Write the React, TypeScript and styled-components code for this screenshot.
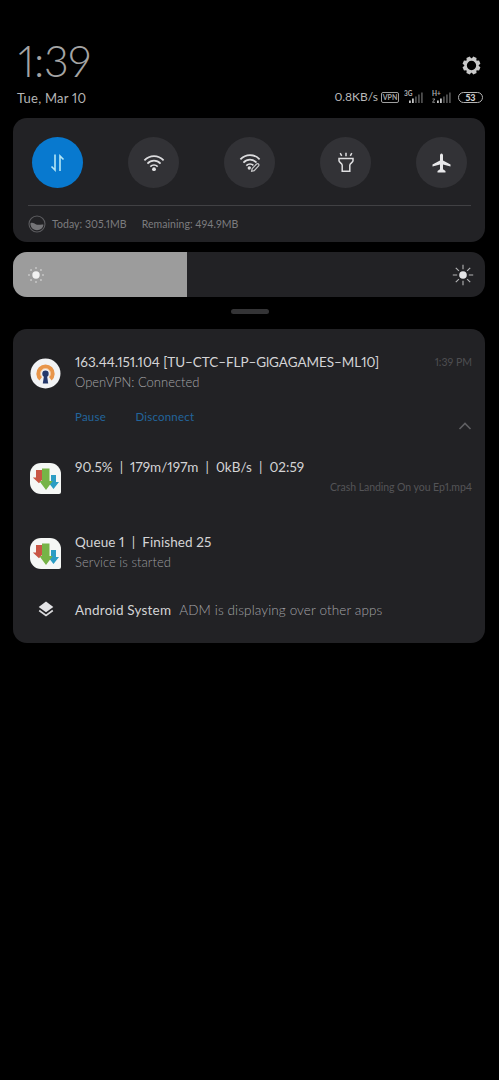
import React from 'react';
import styled, { createGlobalStyle } from 'styled-components';

const GlobalStyle = createGlobalStyle`
  * { box-sizing: border-box; }
  body { margin: 0; background: #000; }
`;

const Screen = styled.main`
  width: 499px;
  height: 1080px;
  padding: 40px 14px 0 13px;
  background: #000;
  overflow: hidden;
  font-family: Lato, 'Noto Sans', sans-serif;
  font-variant-numeric: proportional-nums;
  color: #d4d4d6;
`;

const Text = styled.span<{ $size: number; $color?: string; $spacing?: number; $weight?: number }>`
  display: block;
  white-space: pre;
  font-size: ${p => p.$size}px;
  line-height: 20px;
  font-weight: ${p => p.$weight ?? 400};
  color: ${p => p.$color ?? '#d4d4d6'};
  letter-spacing: ${p => p.$spacing ?? 0}px;
`;

const Header = styled.header`
  display: flex;
  justify-content: space-between;
  height: 78px;
  padding-left: 4px;
`;

const Clock = styled.div`
  height: 44px;
  padding-left: 1px;
  font-size: 43px;
  line-height: 42px;
  font-weight: 300;
  color: #a4a4a4;
  letter-spacing: -0.3px;
  margin-bottom: 4px;
`;

const StatusSide = styled.div`
  display: flex;
  flex-direction: column;
  align-items: flex-end;
  padding: 16px 2px 0 0;
`;

const StatusBar = styled.div`
  display: flex;
  align-items: center;
  height: 20px;
  margin-top: 12px;
`;

const Gear = styled.svg`
  margin-right: 2px;
`;

const VpnBadge = styled.span`
  width: 18px;
  height: 11px;
  margin-left: 3px;
  border: 1px solid #a0a0a0;
  border-radius: 2px;
  font-size: 7px;
  line-height: 9px;
  font-weight: 700;
  text-align: center;
  color: #a8a8a8;
`;

const Battery = styled.span`
  width: 25px;
  height: 11px;
  margin-left: 6px;
  border: 1px solid #b4b4b4;
  border-radius: 6px;
  font-size: 9px;
  line-height: 9px;
  font-weight: 900;
  text-align: center;
  color: #d0d0d0;
`;

const Signal = styled.svg<{ $gap: number }>`
  margin-left: ${p => p.$gap}px;
`;

const Panel = styled.section`
  background: #222225;
  border-radius: 14px;
  overflow: hidden;
`;

const TogglePanel = styled(Panel)`
  height: 124px;
  padding: 19px 14px 0 15px;
`;

const Toggles = styled.div`
  display: flex;
  justify-content: space-between;
  padding: 0 4px 0 4px;
`;

const Toggle = styled.button<{ $on?: boolean }>`
  display: grid;
  place-items: center;
  width: 51px;
  height: 51px;
  padding: 0;
  border: 0;
  border-radius: 50%;
  background: ${p => (p.$on ? '#0879cf' : '#323236')};
`;

const Usage = styled.div`
  display: flex;
  align-items: center;
  height: 36px;
  margin-top: 17px;
  border-top: 1px solid #414144;
`;

const UsageText = styled(Text)<{ $gap: number }>`
  margin-left: ${p => p.$gap}px;
`;

const Slider = styled.section`
  display: flex;
  height: 45px;
  margin-top: 10px;
  border-radius: 14px;
  background: #222225;
  overflow: hidden;
`;

const SliderFill = styled.div`
  display: flex;
  align-items: center;
  width: 173.5px;
  padding-left: 13px;
  background: #9c9c9c;
`;

const SliderRest = styled.div`
  display: flex;
  flex: 1;
  align-items: center;
  justify-content: flex-end;
  padding-right: 11px;
`;

const Handle = styled.div`
  width: 38px;
  height: 5px;
  margin: 12px auto 15px 218px;
  border-radius: 3px;
  background: #343436;
`;

const NotificationPanel = styled(Panel)`
  height: 314px;
`;

const Notification = styled.article<{ $height: number; $top: number }>`
  display: flex;
  height: ${p => p.$height}px;
  padding: ${p => p.$top}px 13px 0 17px;
`;

const IconSlot = styled.div<{ $top?: number }>`
  flex: none;
  display: flex;
  justify-content: center;
  width: 31px;
  height: 31px;
  margin: ${p => p.$top ?? 0}px 14px 0 0;
`;

const Body = styled.div`
  flex: 1;
  min-width: 0;
`;

const Line = styled.div<{ $end?: boolean }>`
  display: flex;
  align-items: center;
  justify-content: ${p => (p.$end ? 'flex-end' : 'space-between')};
  height: 20px;
`;

const Inline = styled.div<{ $gap: number }>`
  display: flex;
  gap: ${p => p.$gap}px;
`;

const Actions = styled.div`
  display: flex;
  justify-content: space-between;
  margin-top: 15px;
`;

const Chevron = styled.svg`
  margin-top: 12px;
`;

const DataIcon = () => (
  <svg width="17" height="20" viewBox="0 0 17 20" fill="none" stroke="#b5e6f5" strokeWidth="1.6">
    <path d="M6 1.5V17L2.5 13.5M11 18V3l3.5 3.5" />
  </svg>
);

const WifiArcs = () => (
  <g fill="none" stroke="#dcdcde" strokeWidth="1.7">
    <path d="M1.4 6.4C6.8.6 15.2.6 20.6 6.4M4.4 9.7c3.8-4 9.4-4 13.2 0M7.3 12.7c2.2-2.3 5.2-2.3 7.4 0" />
  </g>
);

const WifiIcon = () => (
  <svg width="22" height="18" viewBox="0 0 22 18">
    <WifiArcs />
    <circle cx="11" cy="15.2" r="1.9" fill="#e4e4e6" />
  </svg>
);

const WifiEditIcon = () => (
  <svg width="22" height="20" viewBox="0 0 22 20">
    <WifiArcs />
    <circle cx="10.3" cy="15" r="1.7" fill="#dcdcde" />
    <path d="M13 16l4.5-4.8 2 1.8-4.5 5-2.4.4z" fill="#323236" stroke="#323236" strokeWidth="2.6" />
    <path d="M13.2 15.6l4.4-4.6c1.4-1 3 .5 2 1.9l-4.4 4.8-2.6.6z" fill="none" stroke="#c8c8ca" strokeWidth="1.2" />
  </svg>
);

const TorchIcon = () => (
  <svg width="18" height="22" viewBox="0 0 18 22" fill="none" stroke="#dedee0" strokeWidth="1.5">
    <path d="M2 6.5h14v2.2c0 1.7-3.2 2.6-3.2 4.5v6H5.2v-6c0-1.9-3.2-2.8-3.2-4.5zM9 .8v3.5M3.2 1.2l1.5 2.6M14.8 1.2l-1.5 2.6" />
  </svg>
);

const PlaneIcon = () => (
  <svg width="19" height="20" viewBox="0 0 19 20" fill="#e8e8ea">
    <path d="M9.5.5c1 0 1.5 1 1.5 2.1v4.8l7.5 4.2v2l-7.5-2v4.7l2.5 1.8V19.4H5.5v-1.3L8 16.3v-4.7l-7.5 2v-2L8 7.4V2.6C8 1.5 8.5.5 9.5.5z" />
  </svg>
);

const GearIcon = () => (
  <Gear width="19" height="19" viewBox="-9.5 -9.5 19 19">
    {[0, 45, 90, 135, 180, 225, 270, 315].map(a => (
      <path key={a} d="M-2.5-6.2L-1.8-8.9H1.8L2.5-6.2z" fill="#c9c9c9" transform={`rotate(${a + 22.5})`} />
    ))}
    <circle r="5.9" fill="none" stroke="#c9c9c9" strokeWidth="2.5" />
  </Gear>
);

const SignalIcon = ({ label, gap, lit, roam }: { label: string; gap: number; lit: number; roam?: boolean }) => (
  <Signal $gap={gap} width="20" height="14" viewBox="0 0 20 14">
    <text x="0" y="6" fontFamily="Lato, sans-serif" fontSize="6.5" fontWeight="700" fill="#b0b0b0">{label}</text>
    {roam && <path d="M.5 9h2.4L.5 12.3H3" fill="none" stroke="#999" strokeWidth=".9" />}
    {[0, 1, 2, 3, 4].map(i => (
      <rect key={i} x={5 + i * 3} y={10.5 - i * 2} width="1.8" height={2.5 + i * 2} fill={i < lit ? '#c4c4c4' : '#4d4d4d'} />
    ))}
  </Signal>
);

const UsageIcon = () => (
  <svg width="18" height="18" viewBox="0 0 18 18">
    <circle cx="9" cy="9" r="8" fill="none" stroke="#5c5c5f" strokeWidth="1.1" />
    <path d="M2.5 8.2c2.2-1.4 4.4.9 6.5 1.5 2.2.5 4.4-.5 6.5 0a6.6 6.6 0 0 1-13 0z" fill="#747477" />
  </svg>
);

const DimSun = () => (
  <svg width="20" height="20" viewBox="-10 -10 20 20" fill="#f2f2f2">
    <circle r="3.7" />
    {[0, 45, 90, 135, 180, 225, 270, 315].map(a => (
      <circle key={a} cy="-7" r="1" fill="#c6c6c6" transform={`rotate(${a})`} />
    ))}
  </svg>
);

const BrightSun = () => (
  <svg width="22" height="22" viewBox="-11 -11 22 22">
    <circle r="3.8" fill="#e4e4e6" />
    {[0, 45, 90, 135, 180, 225, 270, 315].map(a => (
      <path key={a} d="M0-5.8V-10.2" stroke="#b4b4b6" strokeWidth="1.1" transform={`rotate(${a})`} />
    ))}
  </svg>
);

const VpnIcon = () => (
  <svg width="31" height="31" viewBox="0 0 31 31">
    <circle cx="15.5" cy="15.5" r="15" fill="#f2f3f5" />
    <path d="M9.4 22.6A9.2 9.2 0 1 1 21.6 22.6L19 19.1a5 5 0 1 0-7 0z" fill="#e8954a" />
    <path d="M11.7 18.8a5 5 0 1 1 7.6 0" fill="none" stroke="#f6c596" strokeWidth="1" />
    <circle cx="15.5" cy="15.7" r="3.2" fill="#24386b" />
    <path d="M14.1 17h2.8l1.3 8.6h-5.4z" fill="#24386b" />
  </svg>
);

const AdmIcon = () => (
  <svg width="31" height="31" viewBox="0 0 31 31">
    <path d="M11 0h9a11 11 0 0 1 11 11v18a2 2 0 0 1-2 2H11A11 11 0 0 1 0 20v-9A11 11 0 0 1 11 0z" fill="#f5f7f5" />
    <path d="M6 7h6v7.5h2.2L9 20.3l-6.2-5.8H6z" fill="#c95645" />
    <path d="M21 12h5v7h3l-5.5 7-5.5-7h3z" fill="#2b9dc4" />
    <path d="M12 5.5h7.5V18h3.2l-6.7 9-6.7-9H12z" fill="#76b447" />
  </svg>
);

const LayersIcon = () => (
  <svg width="18" height="18" viewBox="0 0 18 18">
    <path d="M9 1.5l7.3 5.4L9 12.3 1.7 6.9z" fill="#e4e4e6" />
    <path d="M2.2 10.5L9 15.5l6.8-5" fill="none" stroke="#d8d8da" strokeWidth="1.7" />
  </svg>
);

export default function App() {
  return (
    <Screen>
      <GlobalStyle />
      <Header>
        <div>
          <Clock>1:39</Clock>
          <Text $size={13} $color="#b5b5b5" $spacing={0.25}>Tue, Mar 10</Text>
        </div>
        <StatusSide>
          <GearIcon />
          <StatusBar>
            <Text $size={12} $color="#b8b8b8">0.8KB/s</Text>
            <VpnBadge>VPN</VpnBadge>
            <SignalIcon label="3G" gap={5} lit={2} />
            <SignalIcon label="H+" gap={8} lit={2} roam />
            <Battery>53</Battery>
          </StatusBar>
        </StatusSide>
      </Header>

      <TogglePanel>
        <Toggles>
          <Toggle $on aria-label="Mobile data"><DataIcon /></Toggle>
          <Toggle aria-label="Wi-Fi"><WifiIcon /></Toggle>
          <Toggle aria-label="Wi-Fi settings"><WifiEditIcon /></Toggle>
          <Toggle aria-label="Torch"><TorchIcon /></Toggle>
          <Toggle aria-label="Aeroplane mode"><PlaneIcon /></Toggle>
        </Toggles>
        <Usage>
          <UsageIcon />
          <UsageText $gap={6} $size={10.5} $color="#7c7c7f" $spacing={0.05}>Today: 305.1MB</UsageText>
          <UsageText $gap={15} $size={10.5} $color="#7c7c7f" $spacing={0.05}>Remaining: 494.9MB</UsageText>
        </Usage>
      </TogglePanel>

      <Slider>
        <SliderFill><DimSun /></SliderFill>
        <SliderRest><BrightSun /></SliderRest>
      </Slider>
      <Handle />

      <NotificationPanel>
        <Notification $height={115} $top={23}>
          <IconSlot $top={6}><VpnIcon /></IconSlot>
          <Body>
            <Line>
              <Text $size={13.5} $spacing={-0.05}>163.44.151.104 [TU–CTC–FLP–GlGAGAMES–ML10]</Text>
              <Text $size={10.5} $color="#4e4e51">1:39 PM</Text>
            </Line>
            <Text $size={13} $weight={300} $color="#a4a4a7">OpenVPN: Connected</Text>
            <Actions>
              <Inline $gap={29.5}>
                <Text $size={11.5} $color="#22659c" $spacing={0.2}>Pause</Text>
                <Text $size={11.5} $color="#22659c" $spacing={0.2}>Disconnect</Text>
              </Inline>
              <Chevron width="14" height="14" viewBox="0 0 14 14" fill="none" stroke="#606063" strokeWidth="1.6">
                <path d="M1.5 10L7 4.5l5.5 5.5" />
              </Chevron>
            </Actions>
          </Body>
        </Notification>
        <Notification $height={75} $top={13}>
          <IconSlot $top={6}><AdmIcon /></IconSlot>
          <Body>
            <Text $size={13.5} $spacing={0.04}>90.5%  |  179m/197m  |  0kB/s  |  02:59</Text>
            <Line $end><Text $size={10.5} $color="#545457" $spacing={-0.05}>Crash Landing On you Ep1.mp4</Text></Line>
          </Body>
        </Notification>
        <Notification $height={68} $top={13}>
          <IconSlot $top={6}><AdmIcon /></IconSlot>
          <Body>
            <Text $size={13.5} $spacing={0.1}>Queue 1  |  Finished 25</Text>
            <Text $size={13} $weight={300} $color="#9a9a9d" $spacing={0.04}>Service is started</Text>
          </Body>
        </Notification>
        <Notification $height={56} $top={13}>
          <IconSlot $top={0}><LayersIcon /></IconSlot>
          <Inline $gap={8}>
            <Text $size={13.5} $spacing={0.2}>Android System</Text>
            <Text $size={13.5} $weight={300} $color="#a4a4a7" $spacing={0.12}>ADM is displaying over other apps</Text>
          </Inline>
        </Notification>
      </NotificationPanel>
    </Screen>
  );
}
